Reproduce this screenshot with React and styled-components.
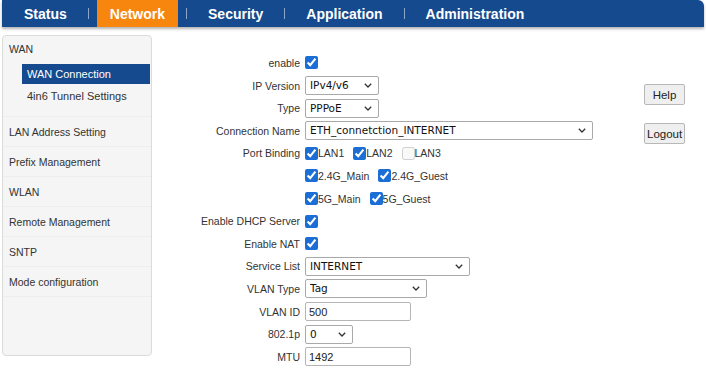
import React from "react";
import styled, { createGlobalStyle } from "styled-components";

const GlobalStyle = createGlobalStyle`
  body {
    margin: 0;
    background: #ffffff;
    font-family: "Liberation Sans", Arial, sans-serif;
    color: #333;
  }
`;

const NavBar = styled.nav`
  display: flex;
  align-items: stretch;
  height: 27px;
  margin: 0 2px;
  padding-left: 9px;
  background: #164a8e;
  border-radius: 0 6px 0 0;
  box-shadow: 0 2px 3px rgba(0, 0, 0, 0.3);
`;

const NavTab = styled.div`
  display: flex;
  align-items: center;
  padding: 0 13px;
  font-size: 14px;
  font-weight: bold;
  color: #ffffff;
  background: ${(p) => (p.$active ? "#f7860f" : "transparent")};
`;

const NavSep = styled.span`
  display: flex;
  align-items: center;
  justify-content: center;
  width: 17px;

  &::before {
    content: "";
    width: 1px;
    height: 11px;
    background: #8ea6c9;
  }
`;

const Page = styled.div`
  display: flex;
  align-items: flex-start;
`;

const Sidebar = styled.aside`
  box-sizing: border-box;
  width: 150px;
  height: 321px;
  margin: 8px 0 0 2px;
  border: 1px solid #dadcda;
  border-radius: 4px;
  background: #f4f5f4;
  font-size: 10.5px;
  color: #333;
`;

const Group = styled.div`
  padding-bottom: 8px;
  border-bottom: 1px solid #eceeec;
`;

const GroupTitle = styled.div`
  height: 25px;
  display: flex;
  align-items: center;
  padding-left: 6px;
`;

const SubList = styled.div`
  padding: 3px 1px 0 19px;
`;

const SubItem = styled.div`
  height: ${(p) => (p.$active ? "20px" : "24px")};
  display: flex;
  align-items: center;
  padding-left: 5px;
  font-size: 11px;
  color: ${(p) => (p.$active ? "#ffffff" : "#333")};
  background: ${(p) => (p.$active ? "#164a8e" : "transparent")};
`;

const MenuItem = styled.div`
  height: 29px;
  display: flex;
  align-items: center;
  padding-left: 6px;
  border-bottom: 1px solid #eceeec;
`;

const Form = styled.div`
  padding-top: 24.7px;
`;

const Row = styled.div`
  display: grid;
  grid-template-columns: 148px 295px;
  column-gap: 5px;
  align-items: center;
  height: 22.6px;
`;

const Label = styled.span`
  text-align: right;
  font-size: 10.5px;
  color: #333;
`;

const Field = styled.div`
  display: flex;
  align-items: center;
`;

const SelectWrap = styled.span`
  position: relative;
  display: inline-flex;
  width: ${(p) => p.$w}px;
`;

const Select = styled.select`
  appearance: none;
  box-sizing: border-box;
  width: 100%;
  height: 19px;
  padding: 0 18px 1px 4px;
  line-height: 16px;
  border: 1px solid #a9a9a9;
  border-radius: 2px;
  background: #ffffff;
  font-family: "DejaVu Sans", Verdana, sans-serif;
  font-size: 10.5px;
  color: #111;
`;

const Chevron = styled.svg`
  position: absolute;
  right: 7px;
  top: 7px;
  pointer-events: none;
`;

const TextInput = styled.input`
  box-sizing: border-box;
  width: ${(p) => p.$w}px;
  height: 19px;
  padding: 0 3px;
  border: 1px solid #b5b5b5;
  border-radius: 2px;
  font-family: "Liberation Sans", Arial, sans-serif;
  font-size: 11px;
  color: #222;
`;

const Check = styled.input.attrs({ type: "checkbox" })`
  width: 13px;
  height: 13px;
  margin: 0;
  accent-color: #1b6ed6;
`;

const CheckGroup = styled.div`
  display: flex;
  align-items: center;
  gap: 9px;
`;

const CheckItem = styled.label`
  display: flex;
  align-items: center;
  font-size: 10.5px;
  color: #333;
`;

const ButtonCol = styled.div`
  display: flex;
  flex-direction: column;
  align-items: flex-start;
  gap: 18px;
  margin: 57px 0 0 44px;
`;

const Button = styled.button`
  box-sizing: border-box;
  min-width: 41px;
  height: 21px;
  padding: 0 2px;
  border: 1px solid #b8b8b8;
  border-radius: 2px;
  background: #efefef;
  font-family: "Liberation Sans", Arial, sans-serif;
  font-size: 11.5px;
  color: #222;
`;

function Dropdown({ width, value, options }) {
  return (
    <SelectWrap $w={width}>
      <Select defaultValue={value}>
        {options.map((o) => (
          <option key={o}>{o}</option>
        ))}
      </Select>
      <Chevron width="8" height="5" viewBox="0 0 8 5">
        <path d="M0.8 0.8 L4 4 L7.2 0.8" fill="none" stroke="#333" strokeWidth="1.3" />
      </Chevron>
    </SelectWrap>
  );
}

function Checks({ items }) {
  return (
    <CheckGroup>
      {items.map(([name, on, disabled]) => (
        <CheckItem key={name}>
          <Check defaultChecked={on} disabled={disabled} />
          {name}
        </CheckItem>
      ))}
    </CheckGroup>
  );
}

const tabs = ["Status", "Network", "Security", "Application", "Administration"];
const menu = ["LAN Address Setting", "Prefix Management", "WLAN", "Remote Management", "SNTP", "Mode configuration"];

export default function App() {
  return (
    <>
      <GlobalStyle />
      <NavBar>
        {tabs.map((t, i) => (
          <React.Fragment key={t}>
            {i > 0 && <NavSep />}
            <NavTab $active={t === "Network"}>{t}</NavTab>
          </React.Fragment>
        ))}
      </NavBar>
      <Page>
        <Sidebar>
          <Group>
            <GroupTitle>WAN</GroupTitle>
            <SubList>
              <SubItem $active>WAN Connection</SubItem>
              <SubItem>4in6 Tunnel Settings</SubItem>
            </SubList>
          </Group>
          {menu.map((m) => (
            <MenuItem key={m}>{m}</MenuItem>
          ))}
        </Sidebar>
        <Form>
          <Row>
            <Label>enable</Label>
            <Field><Check defaultChecked /></Field>
          </Row>
          <Row>
            <Label>IP Version</Label>
            <Field><Dropdown width={74} value="IPv4/v6" options={["IPv4", "IPv6", "IPv4/v6"]} /></Field>
          </Row>
          <Row>
            <Label>Type</Label>
            <Field><Dropdown width={74} value="PPPoE" options={["DHCP", "Static", "PPPoE"]} /></Field>
          </Row>
          <Row>
            <Label>Connection Name</Label>
            <Field><Dropdown width={288} value="ETH_connetction_INTERNET" options={["ETH_connetction_INTERNET"]} /></Field>
          </Row>
          <Row>
            <Label>Port Binding</Label>
            <Checks items={[["LAN1", true], ["LAN2", true], ["LAN3", false, true]]} />
          </Row>
          <Row>
            <Label />
            <Checks items={[["2.4G_Main", true], ["2.4G_Guest", true]]} />
          </Row>
          <Row>
            <Label />
            <Checks items={[["5G_Main", true], ["5G_Guest", true]]} />
          </Row>
          <Row>
            <Label>Enable DHCP Server</Label>
            <Field><Check defaultChecked /></Field>
          </Row>
          <Row>
            <Label>Enable NAT</Label>
            <Field><Check defaultChecked /></Field>
          </Row>
          <Row>
            <Label>Service List</Label>
            <Field><Dropdown width={165} value="INTERNET" options={["INTERNET", "TR069", "VOIP"]} /></Field>
          </Row>
          <Row>
            <Label>VLAN Type</Label>
            <Field><Dropdown width={122} value="Tag" options={["Tag", "Untag"]} /></Field>
          </Row>
          <Row>
            <Label>VLAN ID</Label>
            <Field><TextInput $w={106} defaultValue="500" /></Field>
          </Row>
          <Row>
            <Label>802.1p</Label>
            <Field><Dropdown width={48} value="0" options={["0", "1", "2", "3", "4", "5", "6", "7"]} /></Field>
          </Row>
          <Row>
            <Label>MTU</Label>
            <Field><TextInput $w={106} defaultValue="1492" /></Field>
          </Row>
        </Form>
        <ButtonCol>
          <Button>Help</Button>
          <Button>Logout</Button>
        </ButtonCol>
      </Page>
    </>
  );
}
